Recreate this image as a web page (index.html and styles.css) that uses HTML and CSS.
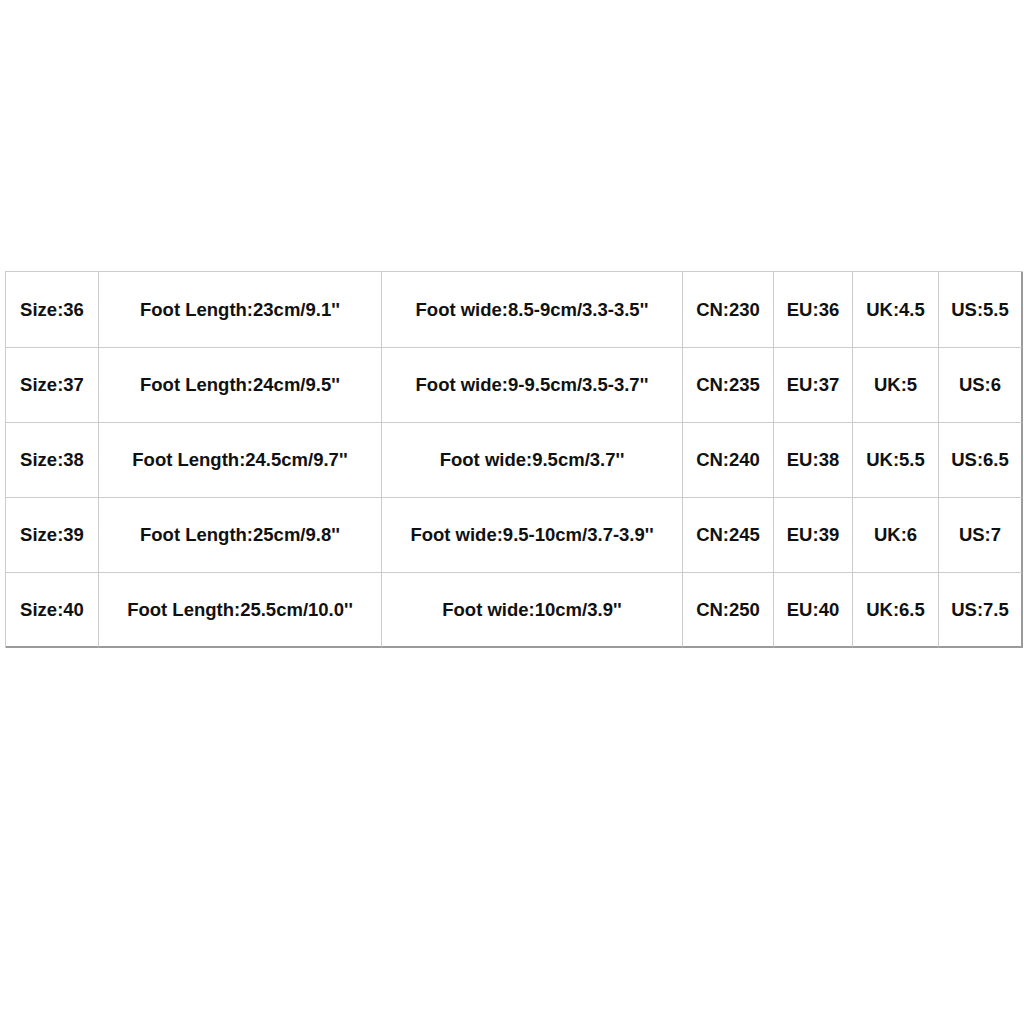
FILE: index.html
```html
<!DOCTYPE html>
<html>
<head>
<meta charset="utf-8">
<link rel="stylesheet" href="styles.css">
</head>
<body>
<div class="page">
  <div class="chart">
    <div class="cell">Size:36</div><div class="cell">Foot Length:23cm/9.1''</div><div class="cell">Foot wide:8.5-9cm/3.3-3.5''</div><div class="cell">CN:230</div><div class="cell">EU:36</div><div class="cell">UK:4.5</div><div class="cell last-col">US:5.5</div>
    <div class="cell">Size:37</div><div class="cell">Foot Length:24cm/9.5''</div><div class="cell">Foot wide:9-9.5cm/3.5-3.7''</div><div class="cell">CN:235</div><div class="cell">EU:37</div><div class="cell">UK:5</div><div class="cell last-col">US:6</div>
    <div class="cell">Size:38</div><div class="cell">Foot Length:24.5cm/9.7''</div><div class="cell">Foot wide:9.5cm/3.7''</div><div class="cell">CN:240</div><div class="cell">EU:38</div><div class="cell">UK:5.5</div><div class="cell last-col">US:6.5</div>
    <div class="cell">Size:39</div><div class="cell">Foot Length:25cm/9.8''</div><div class="cell">Foot wide:9.5-10cm/3.7-3.9''</div><div class="cell">CN:245</div><div class="cell">EU:39</div><div class="cell">UK:6</div><div class="cell last-col">US:7</div>
    <div class="cell last-row">Size:40</div><div class="cell last-row">Foot Length:25.5cm/10.0''</div><div class="cell last-row">Foot wide:10cm/3.9''</div><div class="cell last-row">CN:250</div><div class="cell last-row">EU:40</div><div class="cell last-row">UK:6.5</div><div class="cell last-row last-col">US:7.5</div>
  </div>
</div>
</body>
</html>
```
FILE: styles.css
```css
html, body {
  margin: 0;
  padding: 0;
  background: #ffffff;
}
.page {
  width: 1024px;
  height: 1024px;
  padding-top: 271px;
  padding-left: 5px;
  box-sizing: border-box;
}
.chart {
  display: grid;
  grid-template-columns: 93px 283px 301px 91px 79px 86px 84px;
  grid-template-rows: 76px 75px 75px 75px 75px;
  width: 1018px;
  border-top: 1px solid #cbcbcb;
  border-left: 1px solid #cbcbcb;
  box-sizing: border-box;
  font-family: "Liberation Sans", Arial, sans-serif;
  font-weight: bold;
  font-size: 18.5px;
  color: #111111;
}
.cell {
  display: flex;
  align-items: center;
  justify-content: center;
  border-right: 1px solid #cbcbcb;
  border-bottom: 1px solid #cbcbcb;
  white-space: nowrap;
  box-sizing: border-box;
}
.last-col {
  border-right: 2px solid #9a9a9a;
}
.last-row {
  border-bottom: 2px solid #9a9a9a;
}
```
